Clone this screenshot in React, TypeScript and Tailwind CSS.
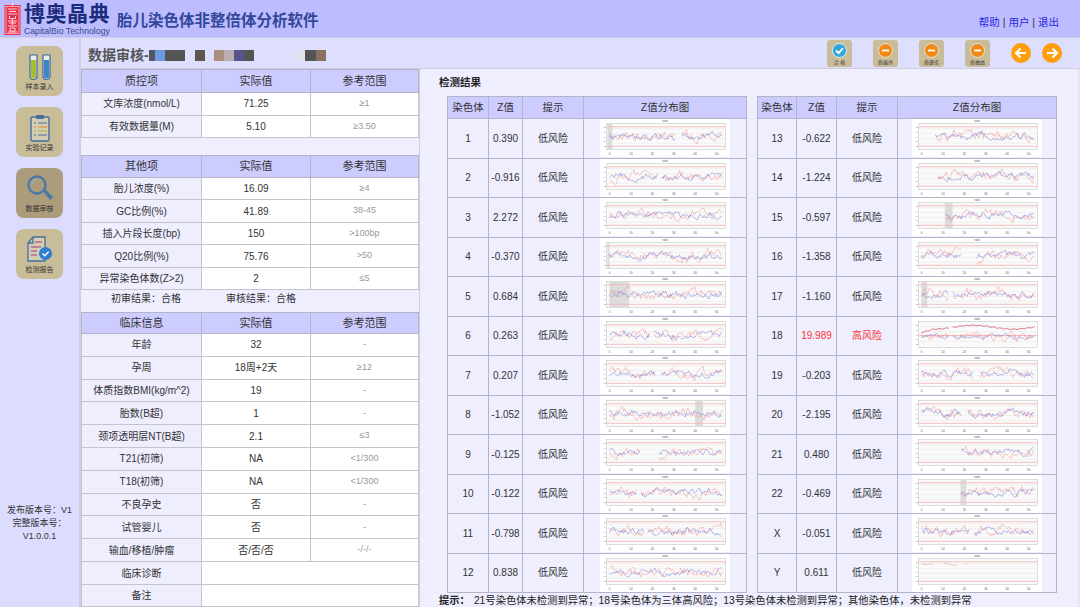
type Row = { label: string; value: string; ref: string };

const font = { fontFamily: '"Liberation Sans", "Noto Sans CJK SC", sans-serif' };

const qcRows: Row[] = [
  { label: '文库浓度(nmol/L)', value: '71.25', ref: '≥1' },
  { label: '有效数据量(M)', value: '5.10', ref: '≥3.50' },
];

const otherRows: Row[] = [
  { label: '胎儿浓度(%)', value: '16.09', ref: '≥4' },
  { label: 'GC比例(%)', value: '41.89', ref: '38-45' },
  { label: '插入片段长度(bp)', value: '150', ref: '>100bp' },
  { label: 'Q20比例(%)', value: '75.76', ref: '>50' },
  { label: '异常染色体数(Z>2)', value: '2', ref: '≤5' },
];

const clinicalRows: Row[] = [
  { label: '年龄', value: '32', ref: '-' },
  { label: '孕周', value: '18周+2天', ref: '≥12' },
  { label: '体质指数BMI(kg/m^2)', value: '19', ref: '-' },
  { label: '胎数(B超)', value: '1', ref: '-' },
  { label: '颈项透明层NT(B超)', value: '2.1', ref: '≤3' },
  { label: 'T21(初筛)', value: 'NA', ref: '<1/300' },
  { label: 'T18(初筛)', value: 'NA', ref: '<1/300' },
  { label: '不良孕史', value: '否', ref: '-' },
  { label: '试管婴儿', value: '否', ref: '-' },
  { label: '输血/移植/肿瘤', value: '否/否/否', ref: '-/-/-' },
];

type Chrom = {
  name: string;
  z: string;
  high?: boolean;
  band?: [number, number];
  gap?: [number, number];
  sparse?: boolean;
};

const leftChroms: Chrom[] = [
  { name: '1', z: '0.390', band: [6, 11], gap: [76, 82] },
  { name: '2', z: '-0.916', gap: [58, 62] },
  { name: '3', z: '2.272' },
  { name: '4', z: '-0.370', band: [6, 8] },
  { name: '5', z: '0.684', band: [8, 28] },
  { name: '6', z: '0.263', gap: [50, 53] },
  { name: '7', z: '0.207', gap: [56, 60] },
  { name: '8', z: '-1.052', band: [96, 104] },
  { name: '9', z: '-0.125', gap: [40, 58] },
  { name: '10', z: '-0.122', gap: [36, 40] },
  { name: '11', z: '-0.798', gap: [44, 47] },
  { name: '12', z: '0.838' },
];

const rightChroms: Chrom[] = [
  { name: '13', z: '-0.622', gap: [5, 22] },
  { name: '14', z: '-1.224', gap: [5, 24] },
  { name: '15', z: '-0.597', band: [32, 40], gap: [5, 32] },
  { name: '16', z: '-1.358', gap: [50, 64] },
  { name: '17', z: '-1.160', band: [8, 14], gap: [36, 40] },
  { name: '18', z: '19.989', high: true, gap: [36, 40] },
  { name: '19', z: '-0.203', gap: [62, 68] },
  { name: '20', z: '-2.195', gap: [50, 56] },
  { name: '21', z: '0.480', gap: [5, 48] },
  { name: '22', z: '-0.469', band: [48, 54], gap: [5, 48] },
  { name: 'X', z: '-0.051', gap: [58, 62] },
  { name: 'Y', z: '0.611', sparse: true },
];

function noise(seed: number) {
  let s = seed * 7919 + 13;
  return () => {
    s = (s * 16807) % 2147483647;
    return (s % 1000) / 1000;
  };
}

// one random walk as a polyline, broken where the chromosome has a gap
function walk(c: Chrom, seed: number, base: number, amp: number) {
  const rnd = noise(seed);
  const parts: string[] = [];
  let cur = '';
  let y = base;
  const end = c.sparse ? 56 : 124;
  for (let x = 8; x <= end; x += 1.2) {
    y += (rnd() - 0.5) * amp + (base - y) * 0.3;
    const skip = c.gap && x > c.gap[0] && x < c.gap[1];
    const hole = c.sparse && ((x > 20 && x < 30) || (x > 46 && x < 52));
    if (skip || hole) {
      if (cur) parts.push(cur);
      cur = '';
      continue;
    }
    cur += `${x.toFixed(1)},${y.toFixed(1)} `;
  }
  if (cur) parts.push(cur);
  return parts;
}

// the slow upper curve of the high-risk chromosome
function highCurve(c: Chrom) {
  const parts: string[] = [];
  let cur = '';
  for (let x = 8; x <= 124; x += 2) {
    if (c.gap && x > c.gap[0] && x < c.gap[1]) {
      parts.push(cur);
      cur = '';
      continue;
    }
    const y = 10.5 + Math.sin(x / 13) * 2 + Math.sin(x * 0.9) * 0.5 + (x < 20 ? (20 - x) * 0.35 : 0);
    cur += `${x},${y.toFixed(1)} `;
  }
  parts.push(cur);
  return parts;
}

function ZChart({ chrom, seed }: { chrom: Chrom; seed: number }) {
  const red = walk(chrom, seed + 1, chrom.high ? 20 : chrom.sparse ? 11 : 18, chrom.sparse ? 2.5 : 8);
  const blue = chrom.sparse ? [] : walk(chrom, seed + 2, chrom.high ? 20 : 18, chrom.high ? 4 : 5.5);
  const top = chrom.high ? highCurve(chrom) : [];
  const limits = chrom.high ? [19] : [8, 28];
  return (
    <svg width="130" height="38" viewBox="0 0 130 39" className="block bg-white">
      <text x="65" y="3.4" fontSize="3" textAnchor="middle" fill="#555">ratio</text>
      <rect x="5" y="4.5" width="122" height="27" fill="#fafafa" stroke="#bbb" strokeWidth="0.5" />
      {[10, 15, 20, 25].map((y) => (
        <line key={y} x1="5" x2="127" y1={y} y2={y} stroke="#e6e6e6" strokeWidth="0.5" />
      ))}
      {chrom.band && (
        <rect x={chrom.band[0]} y="4.5" width={chrom.band[1] - chrom.band[0]} height="27" fill="#dcdcdc" />
      )}
      {limits.map((y) => (
        <line key={y} x1="5" x2="127" y1={y} y2={y} stroke="#f5b5b5" strokeWidth="0.9" />
      ))}
      {red.map((p, i) => (
        <polyline key={i} points={p} fill="none" stroke="#f09090" strokeWidth="0.5" />
      ))}
      {blue.map((p, i) => (
        <polyline key={i} points={p} fill="none" stroke="#7070d8" strokeWidth="0.5" />
      ))}
      {top.map((p, i) => (
        <polyline key={i} points={p} fill="none" stroke="#d0405a" strokeWidth="0.7" />
      ))}
      {[8, 30, 52, 74, 96, 118].map((x, i) => (
        <text key={x} x={x} y="36.5" fontSize="3" textAnchor="middle" fill="#555">{i * 10}</text>
      ))}
      {[8, 13, 18, 23, 28].map((y) => (
        <text key={y} x="3" y={y + 1} fontSize="2.6" textAnchor="middle" fill="#555">{(28 - y) / 5 - 2}</text>
      ))}
    </svg>
  );
}

function InfoTable({ title, rows, headH = 'h-[23px]' }: { title: string; rows: Row[]; headH?: string }) {
  return (
    <table className="w-full table-fixed border-collapse text-[10px] text-[#333]">
      <colgroup>
        <col className="w-[120px]" />
        <col className="w-[109px]" />
        <col />
      </colgroup>
      <thead>
        <tr className={`${headH} bg-[#ccccff] text-[11px]`}>
          <th className="border border-[#b4b4c8] font-normal">{title}</th>
          <th className="border border-[#b4b4c8] font-normal">实际值</th>
          <th className="border border-[#b4b4c8] font-normal">参考范围</th>
        </tr>
      </thead>
      <tbody>
        {rows.map((r) => (
          <tr key={r.label} className="h-[22.5px]">
            <td className="border border-[#c4c4d0] bg-[#eeeeff] text-center">{r.label}</td>
            <td className="border border-[#c4c4d0] bg-white text-center">{r.value}</td>
            <td className="border border-[#c4c4d0] bg-white text-center text-[9px] text-[#999]">{r.ref}</td>
          </tr>
        ))}
      </tbody>
    </table>
  );
}

function ChromTable({ chroms, widths, offset }: { chroms: Chrom[]; widths: [number, number]; offset: number }) {
  return (
    <table className="w-[300px] table-fixed border-collapse text-[10px] text-[#333]">
      <colgroup>
        <col style={{ width: widths[0] }} />
        <col style={{ width: widths[1] }} />
        <col className="w-[61px]" />
        <col />
      </colgroup>
      <thead>
        <tr className="h-[22px] bg-[#ccccff] text-[10.5px]">
          <th className="border border-[#b4b4c8] font-normal">染色体</th>
          <th className="border border-[#b4b4c8] font-normal">Z值</th>
          <th className="border border-[#b4b4c8] font-normal">提示</th>
          <th className="border border-[#b4b4c8] font-normal">Z值分布图</th>
        </tr>
      </thead>
      <tbody>
        {chroms.map((c, i) => (
          <tr key={c.name} className="h-[39.5px]">
            <td className="border border-[#b4b4c8] text-center">{c.name}</td>
            <td className={`border border-[#b4b4c8] text-center ${c.high ? 'text-[#ff3333]' : ''}`}>{c.z}</td>
            <td className={`border border-[#b4b4c8] text-center ${c.high ? 'text-[#ff3333]' : ''}`}>
              {c.high ? '高风险' : '低风险'}
            </td>
            <td className="border border-[#b4b4c8] p-0">
              <div className="flex justify-center">
                <ZChart chrom={c} seed={offset + i * 11} />
              </div>
            </td>
          </tr>
        ))}
      </tbody>
    </table>
  );
}

function Logo() {
  return (
    <svg width="17" height="32" viewBox="0 0 17 32" className="shrink-0">
      <rect x="0.5" y="2" width="16" height="30" fill="#e8304a" />
      <rect x="2" y="3.5" width="13" height="27" fill="none" stroke="#fbd5da" strokeWidth="0.7" />
      <path d="M8.5 0v3M4 6h9M5 8.500h7M4 11h9M5.500 13v2.500h6V13M4 18h9M8.500 16v6M5 20h7M4 23h9M6 25h5v3H6zM4 29h9" stroke="#fbd5da" strokeWidth="1" fill="none" />
    </svg>
  );
}

function SideButton({ label, active, children }: { label: string; active?: boolean; children: React.ReactNode }) {
  return (
    <div className={`flex h-[50px] w-[47px] flex-col items-center rounded-lg ${active ? 'bg-[#ab9c7c]' : 'bg-[#c9bc99]'}`}>
      <div className="flex h-[35px] items-end justify-center">{children}</div>
      <div className="mt-[1px] text-[7px] leading-[9px] text-[#333]">{label}</div>
    </div>
  );
}

function TubesIcon() {
  return (
    <svg width="26" height="28" viewBox="0 0 26 28">
      <path d="M3 2h7v21a3.500 3.500 0 0 1-7 0z" fill="#e9edf0" stroke="#3d6a92" strokeWidth="1.200" />
      <path d="M4 7h5v16a2.500 2.500 0 0 1-5 0z" fill="#a4bd33" />
      <path d="M16 2h7v21a3.500 3.500 0 0 1-7 0z" fill="#e9edf0" stroke="#3d6a92" strokeWidth="1.200" />
      <path d="M17 7h5v16a2.500 2.500 0 0 1-5 0z" fill="#3b86c8" />
    </svg>
  );
}

function ClipboardIcon() {
  return (
    <svg width="24" height="28" viewBox="0 0 24 28">
      <rect x="3" y="3" width="18" height="24" rx="1.500" fill="#d3cdb5" stroke="#46709c" strokeWidth="1.400" />
      <rect x="8" y="1" width="8" height="4" rx="1" fill="#46709c" />
      <path d="M6 9h2M10 9h9" stroke="#46709c" strokeWidth="1.200" />
      <path d="M6 13h2M10 13h9" stroke="#e08a2e" strokeWidth="1.200" />
      <path d="M6 17h2M10 17h9" stroke="#a4bd33" strokeWidth="1.200" />
      <path d="M6 21h2M10 21h9" stroke="#46709c" strokeWidth="1.200" />
    </svg>
  );
}

function SearchIcon() {
  return (
    <svg width="28" height="30" viewBox="0 0 28 28">
      <circle cx="11" cy="11" r="8.500" fill="none" stroke="#4a78a8" strokeWidth="2.400" />
      <path d="M6 10a5 5 0 0 1 5-5" fill="none" stroke="#8fb0cc" strokeWidth="1.200" />
      <path d="M17 17l2-2 8 8-3 3z" fill="#4a78a8" />
    </svg>
  );
}

function ReportIcon() {
  return (
    <svg width="27" height="28" viewBox="0 0 27 28">
      <path d="M7 1h12v24H2V7z" fill="#d3cdb5" stroke="#46709c" strokeWidth="1.300" />
      <path d="M7 1v6H2" fill="none" stroke="#46709c" strokeWidth="1.300" />
      <path d="M9 6h7M5 11h10M5 15h6M5 19h6" stroke="#b0357a" strokeWidth="1.200" />
      <circle cx="19.500" cy="17.500" r="6.500" fill="#2f7fd0" />
      <path d="M16.500 17.500l2.200 2.200 4-4" fill="none" stroke="#fff" strokeWidth="1.400" />
    </svg>
  );
}

function ActionButton({ label, ok }: { label: string; ok?: boolean }) {
  return (
    <div className="flex h-[27px] w-[25px] flex-col items-center rounded-[3px] bg-[#c9bc99] pt-[3px]">
      <svg width="15" height="15" viewBox="0 0 15 15">
        {ok ? (
          <>
            <circle cx="7.500" cy="7.500" r="7" fill="#2fa6dc" stroke="#e8eef0" strokeWidth="1" />
            <path d="M4 7.500l2.600 2.600L11 5.200" fill="none" stroke="#fff" strokeWidth="1.800" />
          </>
        ) : (
          <>
            <circle cx="7.500" cy="7.500" r="7" fill="#f08a14" stroke="#e8e4d8" strokeWidth="1" />
            <path d="M4 7.500h7" stroke="#fff" strokeWidth="1.800" />
          </>
        )}
      </svg>
      <div className="mt-[1px] text-[5px] leading-[7px] text-[#333]">{label}</div>
    </div>
  );
}

function ArrowButton({ dir }: { dir: 'left' | 'right' }) {
  return (
    <svg width="20" height="20" viewBox="0 0 20 20">
      <circle cx="10" cy="10" r="10" fill="#ff9d0a" />
      <path
        d={dir === 'left' ? 'M9.500 5.500L5 10l4.500 4.500M5.500 10H15' : 'M10.500 5.500L15 10l-4.500 4.500M14.500 10H5'}
        fill="none"
        stroke="#fff"
        strokeWidth="2.200"
      />
    </svg>
  );
}

const mosaic: [string, number, number][] = [
  ['#555566', 6, 0],
  ['#6c9ae0', 10, 0],
  ['#555555', 20, 10],
  ['#5e5550', 10, 9],
  ['#a88f80', 10, 0],
  ['#bcaeb0', 10, 0],
  ['#55558a', 10, 0],
  ['#555555', 10, 41],
  ['#e2e2ee', 10, 0],
  ['#555555', 11, 0],
  ['#8a7060', 10, 0],
];

export default function App() {
  return (
    <div style={font} className="flex h-[607px] w-[1080px] flex-col overflow-hidden bg-[#cfcfdc]">
      <header className="flex h-[37px] shrink-0 items-center bg-[#bcbcff] pl-[4px] pr-[21px]">
        <Logo />
        <div className="ml-[3px] flex flex-col">
          <div className="text-[21px] font-bold leading-[24px] tracking-[0.5px] text-[#1c2c7c]">博奥晶典</div>
          <div className="text-[8.700px] leading-[10px] text-[#3a4a8c]">CapitalBio Technology</div>
        </div>
        <div className="ml-[7px] mt-[4px] text-[15.500px] font-bold text-[#33479a]">胎儿染色体非整倍体分析软件</div>
        <div className="ml-auto mt-[9px] text-[10.500px] text-[#2a2ae0]">
          帮助 <span className="text-[#333]">|</span> 用户 <span className="text-[#333]">|</span> 退出
        </div>
      </header>

      <div className="mt-[1px] flex min-h-0 flex-1">
        <aside className="flex w-[79px] shrink-0 flex-col items-center bg-[#dcdcff] pt-[8px]">
          <div className="flex flex-col gap-[11px]">
            <SideButton label="样本录入"><TubesIcon /></SideButton>
            <SideButton label="实验记录"><ClipboardIcon /></SideButton>
            <SideButton label="数据审核" active><SearchIcon /></SideButton>
            <SideButton label="检测报告"><ReportIcon /></SideButton>
          </div>
          <div className="mt-[225px] text-center text-[9px] leading-[13px] text-[#333]">
            <div>发布版本号：V1</div>
            <div>完整版本号：</div>
            <div>V1.0.0.1</div>
          </div>
        </aside>

        <div className="ml-[2px] flex min-w-0 flex-1 flex-col">
          <div className="flex h-[30px] shrink-0 items-center bg-[#dedeff] pl-[7px] pr-[18px]">
            <div className="mt-[4px] flex items-center">
              <span className="text-[14px] font-bold text-[#555]">数据审核-</span>
              <div className="flex h-[11px]">
                {mosaic.map(([color, w, after], i) => (
                  <div key={i} style={{ backgroundColor: color, width: w, marginRight: after }} />
                ))}
              </div>
            </div>
            <div className="ml-auto flex items-center">
              <div className="flex gap-[21px]">
                <ActionButton label="合 格" ok />
                <ActionButton label="质展序" />
                <ActionButton label="质建库" />
                <ActionButton label="质抽血" />
              </div>
              <div className="ml-[21px] flex gap-[11px]">
                <ArrowButton dir="left" />
                <ArrowButton dir="right" />
              </div>
            </div>
          </div>

          <div className="mt-[1px] flex min-h-0 flex-1">
            <div className="flex w-[338px] shrink-0 flex-col bg-[#eeeeff]">
              <InfoTable title="质控项" rows={qcRows} />
              <div className="h-[17px]" />
              <InfoTable title="其他项" rows={otherRows} headH="h-[22px]" />
              <div className="flex h-[22px] items-center pb-[5px] pl-[30px] text-[10px] text-[#333]">
                <span className="w-[115px]">初审结果：合格</span>
                <span>审核结果：合格</span>
              </div>
              <table className="w-full table-fixed border-collapse text-[10px] text-[#333]">
                <colgroup>
                  <col className="w-[120px]" />
                  <col className="w-[109px]" />
                  <col />
                </colgroup>
                <thead>
                  <tr className="h-[21px] bg-[#ccccff] text-[11px]">
                    <th className="border border-[#b4b4c8] font-normal">临床信息</th>
                    <th className="border border-[#b4b4c8] font-normal">实际值</th>
                    <th className="border border-[#b4b4c8] font-normal">参考范围</th>
                  </tr>
                </thead>
                <tbody>
                  {clinicalRows.map((r) => (
                    <tr key={r.label} className="h-[22.8px]">
                      <td className="border border-[#c4c4d0] bg-[#eeeeff] text-center">{r.label}</td>
                      <td className="border border-[#c4c4d0] bg-white text-center">{r.value}</td>
                      <td className="border border-[#c4c4d0] bg-white text-center text-[9px] text-[#999]">{r.ref}</td>
                    </tr>
                  ))}
                  <tr className="h-[23px]">
                    <td className="border border-[#c4c4d0] bg-[#eeeeff] text-center">临床诊断</td>
                    <td colSpan={2} className="border border-[#c4c4d0] bg-white" />
                  </tr>
                  <tr className="h-[22px]">
                    <td className="border border-[#c4c4d0] bg-[#eeeeff] text-center">备注</td>
                    <td colSpan={2} className="border border-[#c4c4d0] bg-white" />
                  </tr>
                </tbody>
              </table>
            </div>

            <div className="ml-[1px] flex min-w-0 flex-1 flex-col bg-[#eeeeff] pl-[19px]">
              <div className="mt-[5px] text-[10.500px] font-bold leading-[16px] text-[#222]">检测结果</div>
              <div className="mt-[6px] flex gap-[10px] pl-[8px]">
                <ChromTable chroms={leftChroms} widths={[41, 34]} offset={3} />
                <ChromTable chroms={rightChroms} widths={[39, 40]} offset={211} />
              </div>
              <div className="mt-[1px] text-[10.300px] leading-[13px] text-[#222]">
                <span className="font-bold">提示：</span>
                <span className="ml-[4px]">21号染色体未检测到异常；18号染色体为三体高风险；13号染色体未检测到异常；其他染色体，未检测到异常</span>
              </div>
            </div>
            <div className="w-[2px] shrink-0 bg-[#e4e4fa]" />
          </div>
        </div>
      </div>
    </div>
  );
}
